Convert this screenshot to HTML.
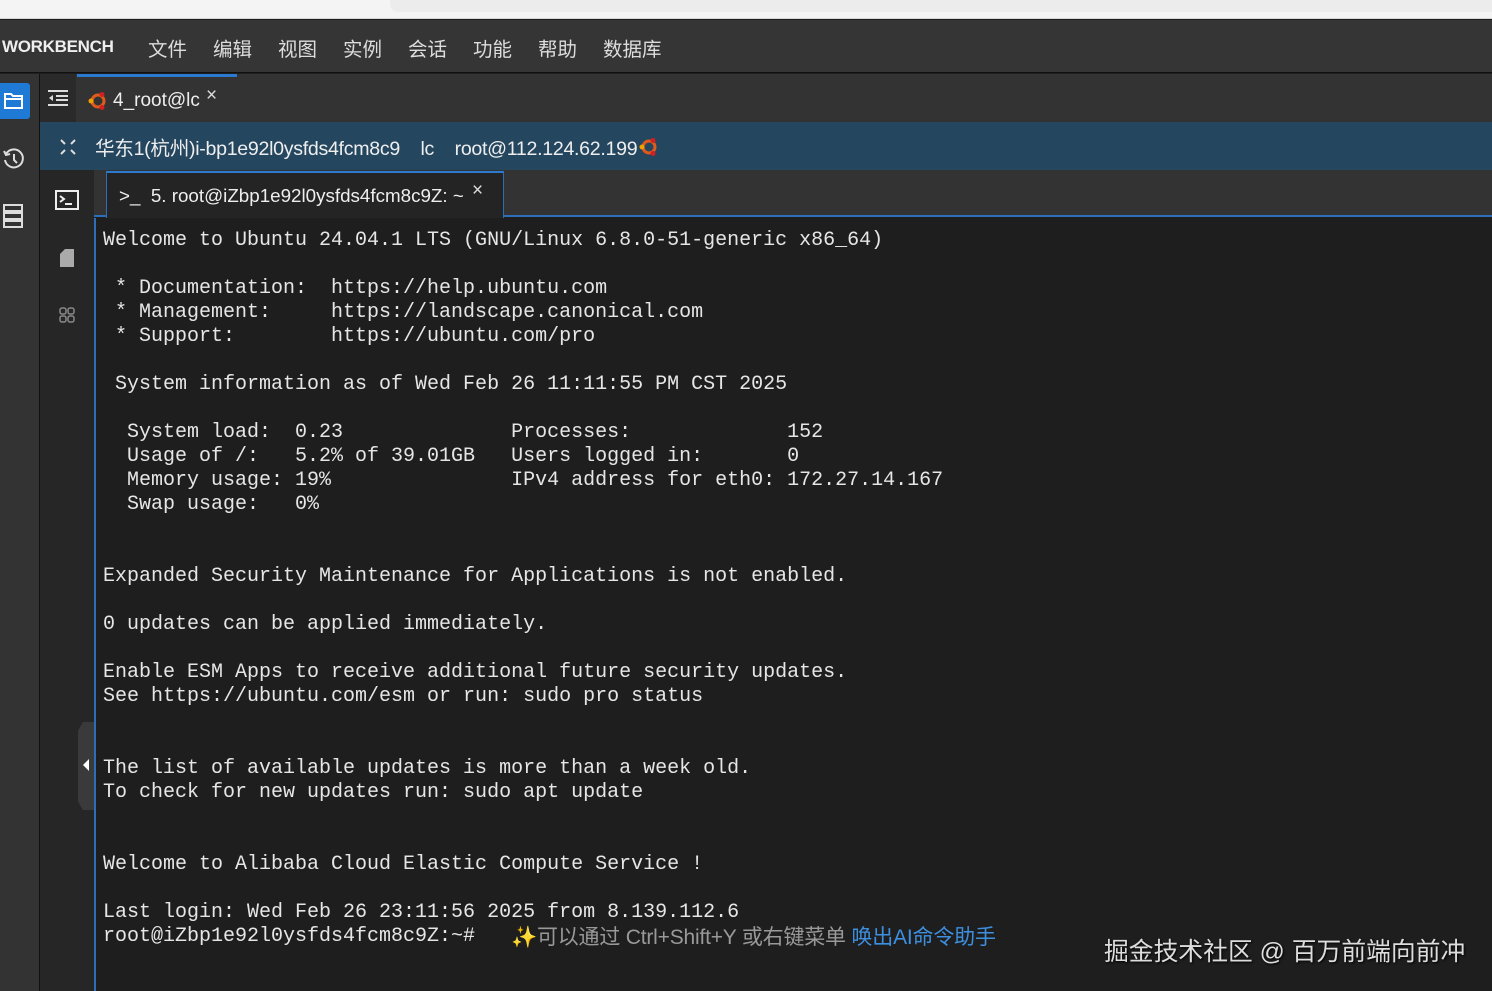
<!DOCTYPE html>
<html><head><meta charset="utf-8"><style>
*{margin:0;padding:0;box-sizing:border-box}
body{width:1492px;height:991px;overflow:hidden;background:#1e1e1e;position:relative;font-family:"Liberation Sans","Noto Sans CJK SC",sans-serif;color:#ddd}
.abs{position:absolute;white-space:nowrap}
pre.abs{font-family:"Liberation Mono","DejaVu Sans Mono",monospace;font-size:20px;line-height:24px;color:#e6e6e6;white-space:pre}
.m span{position:absolute;white-space:nowrap}
</style></head><body>
<div class="abs" style="left:0;top:0;width:1492px;height:19px;background:#f4f4f4;border-bottom:1px solid #d6d6d6"></div>
<div class="abs" style="left:390px;top:0;width:1102px;height:12px;background:#ececec;border-radius:0 0 0 8px"></div>
<div class="abs" style="left:0;top:20px;width:1492px;height:53px;background:#353535;border-bottom:1px solid #111"></div>
<div class="abs" style="left:2px;top:37px;font-size:17px;font-weight:bold;color:#eee;letter-spacing:-0.3px">WORKBENCH</div>
<div class="abs m" style="left:148px;top:33px;font-size:19.5px;color:#ddd">
<span style="left:0">文件</span><span style="left:65px">编辑</span><span style="left:130px">视图</span><span style="left:195px">实例</span><span style="left:260px">会话</span><span style="left:325px">功能</span><span style="left:390px">帮助</span><span style="left:455px">数据库</span></div>
<!-- left sidebar -->
<div class="abs" style="left:0;top:74px;width:40px;height:917px;background:#333;border-right:1px solid #111"></div>
<div class="abs" style="left:0;top:83px;width:30px;height:36px;background:#1f7ad6;border-radius:0 3px 3px 0"></div>
<svg class="abs" style="left:3px;top:91px" width="22" height="20" viewBox="0 0 22 20"><path d="M2 3h6l2 2h9v12H2z M2 8h17" fill="none" stroke="#fff" stroke-width="2"/></svg>
<svg class="abs" style="left:2px;top:146px" width="24" height="26" viewBox="0 0 24 26"><path d="M4 8a9 9 0 1 1 -1 6" fill="none" stroke="#ddd" stroke-width="2"/><path d="M2 5l2 4 4-1" fill="none" stroke="#ddd" stroke-width="2"/><path d="M12 8v6l3 3" fill="none" stroke="#ddd" stroke-width="2"/></svg>
<svg class="abs" style="left:3px;top:204px" width="20" height="26" viewBox="0 0 20 26"><rect x="1" y="1" width="18" height="6" fill="none" stroke="#ddd" stroke-width="2"/><rect x="1" y="9" width="18" height="6" fill="none" stroke="#ddd" stroke-width="2"/><rect x="1" y="17" width="18" height="6" fill="none" stroke="#ddd" stroke-width="2"/></svg>
<!-- second column -->
<div class="abs" style="left:40px;top:74px;width:36px;height:48px;background:#2a2a2a"></div>
<div class="abs" style="left:76px;top:74px;width:1416px;height:48px;background:#333"></div>
<svg class="abs" style="left:47px;top:89px" width="22" height="18" viewBox="0 0 22 18"><path d="M1 2h20M9 7h12M9 11h12M1 16h20" stroke="#ddd" stroke-width="2"/><path d="M6 6l-4 3 4 3z" fill="#ddd"/></svg>
<div class="abs" style="left:77px;top:74px;width:160px;height:48px;background:#333;border-top:3px solid #2c7ad0"></div>
<svg class="abs" style="left:88px;top:91px" width="20" height="20" viewBox="0 0 20 20"><circle cx="10" cy="10" r="6" fill="none" stroke="#e05a1c" stroke-width="3"/><circle cx="3" cy="10" r="2.5" fill="#f0a000"/><circle cx="14" cy="3.5" r="2.5" fill="#d02020"/><circle cx="14" cy="16.5" r="2.5" fill="#d02020"/></svg>
<div class="abs" style="left:113px;top:90px;font-size:19px;color:#eee">4_root@lc</div>
<div class="abs" style="left:206px;top:85px;font-size:19px;color:#ddd">×</div>
<!-- blue bar -->
<div class="abs" style="left:40px;top:122px;width:1452px;height:48px;background:#24465f"></div>
<svg class="abs" style="left:59px;top:138px" width="18" height="18" viewBox="0 0 18 18"><path d="M2 2l4 4M16 2l-4 4M2 16l4-4M16 16l-4-4" stroke="#ddd" stroke-width="2"/></svg>
<div class="abs" style="left:95px;top:132px;font-size:19.6px;color:#eee;letter-spacing:-0.3px">华东1(杭州)i-bp1e92l0ysfds4fcm8c9 &nbsp;&nbsp; lc &nbsp;&nbsp; root@112.124.62.199</div>
<svg class="abs" style="left:639px;top:137px" width="20" height="20" viewBox="0 0 20 20"><circle cx="10" cy="10" r="6" fill="none" stroke="#e05a1c" stroke-width="3"/><circle cx="3" cy="10" r="2.5" fill="#f0a000"/><circle cx="14" cy="3.5" r="2.5" fill="#d02020"/><circle cx="14" cy="16.5" r="2.5" fill="#d02020"/></svg>
<!-- lower second column -->
<div class="abs" style="left:40px;top:170px;width:54px;height:821px;background:#262626"></div>
<svg class="abs" style="left:55px;top:190px" width="24" height="20" viewBox="0 0 24 20"><rect x="1" y="1" width="22" height="18" fill="none" stroke="#eee" stroke-width="2"/><path d="M5 6l4 3-4 3M10 14h7" fill="none" stroke="#eee" stroke-width="2"/></svg>
<svg class="abs" style="left:59px;top:248px" width="16" height="20" viewBox="0 0 16 20"><path d="M6 1h9v18H1V6z" fill="#aaa"/></svg>
<svg class="abs" style="left:58px;top:306px" width="18" height="18" viewBox="0 0 18 18"><g fill="none" stroke="#888" stroke-width="1.5"><rect x="2" y="2" width="6" height="6" rx="2"/><rect x="10" y="2" width="6" height="6" rx="2"/><rect x="2" y="10" width="6" height="6" rx="2"/><rect x="10" y="10" width="6" height="6" rx="2"/></g></svg>
<div class="abs" style="left:94px;top:170px;width:1398px;height:47px;background:#333;border-bottom:2px solid #2c6fb8"></div>
<div class="abs" style="left:106px;top:171px;width:398px;height:48px;background:#242424;border:1px solid #2c6fb8;border-top:2px solid #2c7ad0;border-bottom:none"></div>
<div class="abs" style="left:119px;top:185px;font-size:18.8px;color:#eee">&gt;_&nbsp; 5. root@iZbp1e92l0ysfds4fcm8c9Z: ~</div>
<div class="abs" style="left:472px;top:180px;font-size:19px;color:#ddd">×</div>
<!-- terminal -->
<div class="abs" style="left:94px;top:218px;width:1398px;height:773px;background:#1e1e1e;border-left:2px solid #2c6fb8"></div>
<div class="abs" style="left:78px;top:722px;width:16px;height:88px;background:#3a3a3a;clip-path:polygon(30% 0,100% 0,100% 100%,30% 100%,0 90%,0 10%)"></div>
<div class="abs" style="left:83px;top:759px;width:0;height:0;border-top:6px solid transparent;border-bottom:6px solid transparent;border-right:6px solid #fff"></div>
<pre class="abs" style="left:103px;top:229px">Welcome to Ubuntu 24.04.1 LTS (GNU/Linux 6.8.0-51-generic x86_64)

 * Documentation:  https://help.ubuntu.com
 * Management:     https://landscape.canonical.com
 * Support:        https://ubuntu.com/pro

 System information as of Wed Feb 26 11:11:55 PM CST 2025

  System load:  0.23              Processes:             152
  Usage of /:   5.2% of 39.01GB   Users logged in:       0
  Memory usage: 19%               IPv4 address for eth0: 172.27.14.167
  Swap usage:   0%


Expanded Security Maintenance for Applications is not enabled.

0 updates can be applied immediately.

Enable ESM Apps to receive additional future security updates.
See https://ubuntu.com/esm or run: sudo pro status


The list of available updates is more than a week old.
To check for new updates run: sudo apt update


Welcome to Alibaba Cloud Elastic Compute Service !

Last login: Wed Feb 26 23:11:56 2025 from 8.139.112.6
root@iZbp1e92l0ysfds4fcm8c9Z:~#</pre>
<div class="abs" style="left:511px;top:921px;font-size:21px;color:#999;letter-spacing:-0.2px"><span style="color:#f5d742">✨</span>可以通过 Ctrl+Shift+Y 或右键菜单 <span style="color:#3d8fe0">唤出AI命令助手</span></div>
<div class="abs" style="left:1104px;top:932px;font-size:24.8px;color:#ddd;text-shadow:1px 1px 2px #000">掘金技术社区 @ 百万前端向前冲</div>
</body></html>
